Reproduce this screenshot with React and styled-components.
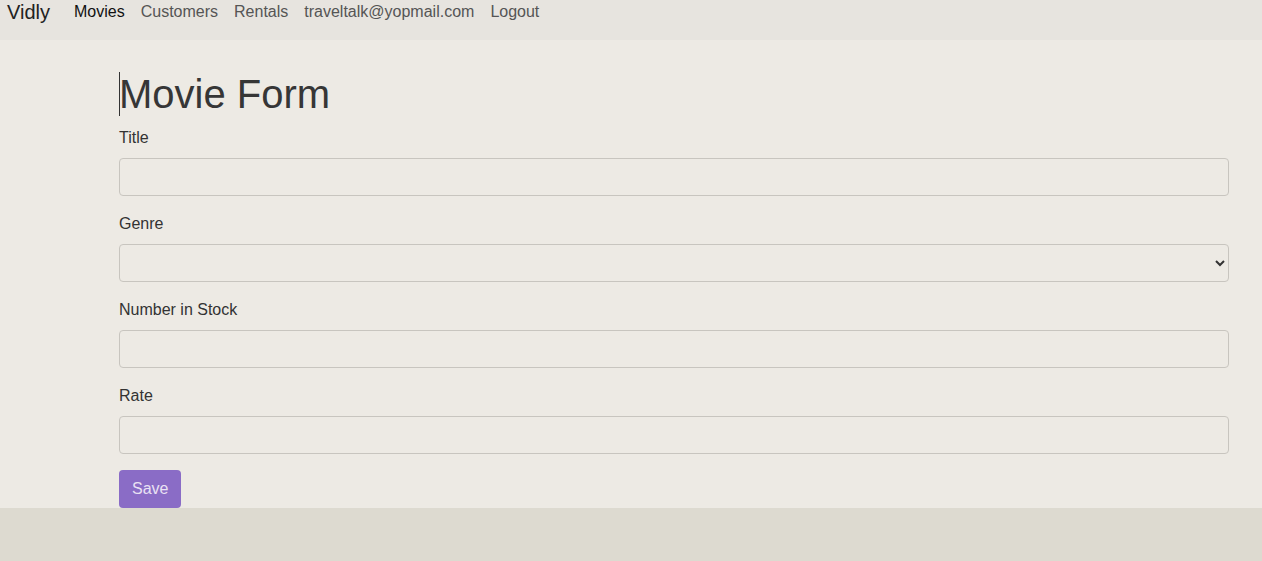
import React from "react";
import styled, { createGlobalStyle } from "styled-components";

const Global = createGlobalStyle`
  html, body { margin: 0; padding: 0; background: #dddad0; }
  body { font-family: "Liberation Sans", Arial, sans-serif; font-size: 16px; line-height: 1.5; color: #333; }
  * { box-sizing: border-box; }
`;

const Page = styled.div`
  background: #edeae4;
`;

const Nav = styled.nav`
  height: 40px;
  background: #e7e4df;
  display: flex;
  align-items: flex-start;
  padding-left: 7px;
`;

const Brand = styled.a`
  font-size: 20px;
  line-height: 24px;
  color: #222;
  text-decoration: none;
  margin-right: 24px;
`;

const NavList = styled.div`
  display: flex;
  gap: 16px;
`;

const NavLink = styled.a`
  font-size: 16px;
  line-height: 24px;
  color: ${(p) => (p.$active ? "#111" : "#555")};
  text-decoration: none;
`;

const Main = styled.main`
  padding: 30px 0 0 119px;
  width: 1229px;
`;

const Heading = styled.h1`
  margin: 0 0 8px;
  font-size: 40px;
  line-height: 48px;
  font-weight: 400;
  color: #363636;
  display: flex;
  align-items: center;
`;

const Caret = styled.span`
  display: inline-block;
  width: 1px;
  height: 44px;
  margin-right: -1px;
  background: #333;
`;

const Group = styled.div`
  margin-bottom: 16px;
`;

const Label = styled.label`
  display: block;
  margin-bottom: 8px;
  font-size: 16px;
  line-height: 24px;
  color: #333;
`;

const Input = styled.input`
  display: block;
  width: 100%;
  height: 38px;
  border: 1px solid #c8c5bf;
  border-radius: 4px;
  background: transparent;
  padding: 6px 12px;
  font: inherit;
  color: #333;
  outline: none;
`;

const Select = styled.select`
  display: block;
  width: 100%;
  height: 38px;
  border: 1px solid #c8c5bf;
  border-radius: 4px;
  background: transparent;
  padding: 6px 8px;
  font: inherit;
  color: #333;
  outline: none;
`;

const Button = styled.button`
  height: 38px;
  padding: 0 13px;
  border: none;
  border-radius: 4px;
  background: #8a6cc6;
  color: #e9e1f3;
  font-family: inherit;
  font-size: 16px;
  line-height: 24px;
`;

export default function App() {
  return (
    <Page>
      <Global />
      <Nav>
        <Brand href="#">Vidly</Brand>
        <NavList>
          <NavLink $active href="#">Movies</NavLink>
          <NavLink href="#">Customers</NavLink>
          <NavLink href="#">Rentals</NavLink>
          <NavLink href="#">traveltalk@yopmail.com</NavLink>
          <NavLink href="#">Logout</NavLink>
        </NavList>
      </Nav>
      <Main>
        <Heading>
          <Caret />
          Movie Form
        </Heading>
        <form onSubmit={(e) => e.preventDefault()}>
          <Group>
            <Label htmlFor="title">Title</Label>
            <Input id="title" />
          </Group>
          <Group>
            <Label htmlFor="genre">Genre</Label>
            <Select id="genre" defaultValue="">
              <option value=""></option>
            </Select>
          </Group>
          <Group>
            <Label htmlFor="stock">Number in Stock</Label>
            <Input id="stock" />
          </Group>
          <Group>
            <Label htmlFor="rate">Rate</Label>
            <Input id="rate" />
          </Group>
          <Button type="submit">Save</Button>
        </form>
      </Main>
    </Page>
  );
}
